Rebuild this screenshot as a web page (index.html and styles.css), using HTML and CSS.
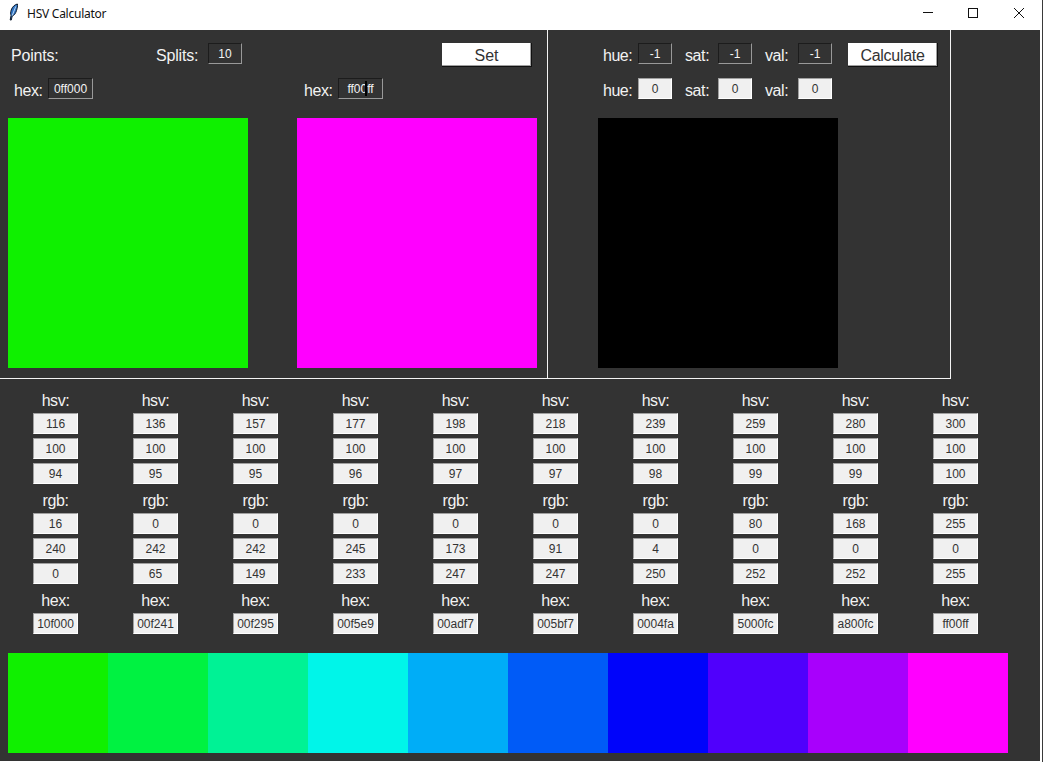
FILE: index.html
```html
<!DOCTYPE html>
<html lang="en">
<head>
<meta charset="utf-8">
<title>HSV Calculator</title>
<link rel="stylesheet" href="styles.css">
</head>
<body>
<div class="window">
  <header class="titlebar">
    <svg class="feather" width="12" height="18" viewBox="0 0 12 18"><path d="M9.4 1 C7 1.4 4.2 3.8 3.2 7 C2.5 9.2 2.5 11 3 12.6 L2.2 17 L3.3 17 L4.2 13 C6.2 12.6 7.6 10.4 8.5 7.6 C9.2 5.2 9.8 2.8 9.4 1 Z" fill="#2f74c4" stroke="#0c1a2c" stroke-width="1"/><path d="M7.8 3.4 L4.2 12.6" stroke="#bcd8f4" stroke-width="1" fill="none"/></svg>
    <span class="title">HSV Calculator</span>
    <svg class="ctl-min" width="10" height="1" viewBox="0 0 10 1"><rect width="10" height="1" fill="#111"/></svg>
    <svg class="ctl-max" width="10" height="10" viewBox="0 0 10 10"><rect x="0.5" y="0.5" width="9" height="9" fill="none" stroke="#111"/></svg>
    <svg class="ctl-close" width="10" height="10" viewBox="0 0 10 10"><path d="M0 0 L10 10 M10 0 L0 10" stroke="#111" stroke-width="1" fill="none"/></svg>
  </header>
  <main class="client">
    <section class="top">
      <div class="panel-left">
        <div class="row row-first">
          <span class="lbl w-points">Points:</span>
          <span class="lbl w-splits">Splits:</span>
          <div class="entry dark w-short">10</div>
          <button class="btn set">Set</button>
        </div>
        <div class="row row-second">
          <span class="lbl w-hex">hex:</span>
          <div class="entry dark w-long">0ff000</div>
          <span class="lbl w-hex second-hex">hex:</span>
          <div class="entry dark w-long cursor-host">ff00ff<i class="ibeam"></i></div>
        </div>
        <div class="swatches">
          <div class="swatch green"></div>
          <div class="swatch magenta"></div>
        </div>
      </div>
      <div class="panel-right">
        <div class="row row-first indent">
          <span class="lbl w-hue">hue:</span>
          <div class="entry dark w-short">-1</div>
          <span class="lbl w-sat">sat:</span>
          <div class="entry dark w-short">-1</div>
          <span class="lbl w-sat">val:</span>
          <div class="entry dark w-short">-1</div>
          <button class="btn calc">Calculate</button>
        </div>
        <div class="row row-second indent">
          <span class="lbl w-hue">hue:</span>
          <div class="entry light w-short">0</div>
          <span class="lbl w-sat">sat:</span>
          <div class="entry light w-short">0</div>
          <span class="lbl w-sat">val:</span>
          <div class="entry light w-short">0</div>
        </div>
        <div class="swatches">
          <div class="swatch black"></div>
        </div>
      </div>
    </section>
    <section class="columns">
      <div class="col"><div class="cap">hsv:</div><div class="entry light w-long">116</div><div class="entry light w-long">100</div><div class="entry light w-long">94</div><div class="cap">rgb:</div><div class="entry light w-long">16</div><div class="entry light w-long">240</div><div class="entry light w-long">0</div><div class="cap">hex:</div><div class="entry light w-long">10f000</div></div>
      <div class="col"><div class="cap">hsv:</div><div class="entry light w-long">136</div><div class="entry light w-long">100</div><div class="entry light w-long">95</div><div class="cap">rgb:</div><div class="entry light w-long">0</div><div class="entry light w-long">242</div><div class="entry light w-long">65</div><div class="cap">hex:</div><div class="entry light w-long">00f241</div></div>
      <div class="col"><div class="cap">hsv:</div><div class="entry light w-long">157</div><div class="entry light w-long">100</div><div class="entry light w-long">95</div><div class="cap">rgb:</div><div class="entry light w-long">0</div><div class="entry light w-long">242</div><div class="entry light w-long">149</div><div class="cap">hex:</div><div class="entry light w-long">00f295</div></div>
      <div class="col"><div class="cap">hsv:</div><div class="entry light w-long">177</div><div class="entry light w-long">100</div><div class="entry light w-long">96</div><div class="cap">rgb:</div><div class="entry light w-long">0</div><div class="entry light w-long">245</div><div class="entry light w-long">233</div><div class="cap">hex:</div><div class="entry light w-long">00f5e9</div></div>
      <div class="col"><div class="cap">hsv:</div><div class="entry light w-long">198</div><div class="entry light w-long">100</div><div class="entry light w-long">97</div><div class="cap">rgb:</div><div class="entry light w-long">0</div><div class="entry light w-long">173</div><div class="entry light w-long">247</div><div class="cap">hex:</div><div class="entry light w-long">00adf7</div></div>
      <div class="col"><div class="cap">hsv:</div><div class="entry light w-long">218</div><div class="entry light w-long">100</div><div class="entry light w-long">97</div><div class="cap">rgb:</div><div class="entry light w-long">0</div><div class="entry light w-long">91</div><div class="entry light w-long">247</div><div class="cap">hex:</div><div class="entry light w-long">005bf7</div></div>
      <div class="col"><div class="cap">hsv:</div><div class="entry light w-long">239</div><div class="entry light w-long">100</div><div class="entry light w-long">98</div><div class="cap">rgb:</div><div class="entry light w-long">0</div><div class="entry light w-long">4</div><div class="entry light w-long">250</div><div class="cap">hex:</div><div class="entry light w-long">0004fa</div></div>
      <div class="col"><div class="cap">hsv:</div><div class="entry light w-long">259</div><div class="entry light w-long">100</div><div class="entry light w-long">99</div><div class="cap">rgb:</div><div class="entry light w-long">80</div><div class="entry light w-long">0</div><div class="entry light w-long">252</div><div class="cap">hex:</div><div class="entry light w-long">5000fc</div></div>
      <div class="col"><div class="cap">hsv:</div><div class="entry light w-long">280</div><div class="entry light w-long">100</div><div class="entry light w-long">99</div><div class="cap">rgb:</div><div class="entry light w-long">168</div><div class="entry light w-long">0</div><div class="entry light w-long">252</div><div class="cap">hex:</div><div class="entry light w-long">a800fc</div></div>
      <div class="col"><div class="cap">hsv:</div><div class="entry light w-long">300</div><div class="entry light w-long">100</div><div class="entry light w-long">100</div><div class="cap">rgb:</div><div class="entry light w-long">255</div><div class="entry light w-long">0</div><div class="entry light w-long">255</div><div class="cap">hex:</div><div class="entry light w-long">ff00ff</div></div>
    </section>
    <section class="strip">
      <div class="band c1"></div><div class="band c2"></div><div class="band c3"></div><div class="band c4"></div><div class="band c5"></div><div class="band c6"></div><div class="band c7"></div><div class="band c8"></div><div class="band c9"></div><div class="band c10"></div>
    </section>
  </main>
</div>
</body>
</html>
```

FILE: styles.css
```css
html, body { margin: 0; padding: 0; background: #fff; }
body { width: 1043px; height: 762px; overflow: hidden; font-family: "Liberation Sans", Arial, sans-serif; }

.window { width: 1042px; height: 762px; border-right: 1px solid #3a3a3a; }

.titlebar { height: 30px; display: flex; align-items: center; background: #fff; }
.feather { margin-left: 8px; margin-top: -6px; flex: none; }
.title { margin-left: 7px; margin-top: -4px; font: 12px "Noto Sans", sans-serif; color: #111; letter-spacing: -0.25px; }
.ctl-min { margin-left: auto; margin-top: -5px; }
.ctl-max { margin-left: 35px; margin-top: -5px; }
.ctl-close { margin-left: 36px; margin-right: 18px; margin-top: -5px; }

.client { width: 1040px; height: 731px; background: #333; }

.top { width: 950px; height: 348px; display: flex; border-right: 1px solid #f4f4f4; border-bottom: 1px solid #f4f4f4; }
.panel-left { width: 547px; padding-top: 13px; border-right: 1px solid #f4f4f4; }
.panel-right { flex: 1; padding: 13px 0 0 50px; }

.row { display: flex; align-items: flex-start; }
.row-first { height: 24px; padding-left: 11px; }
.row-second { height: 21px; margin-top: 11px; padding-left: 14px; }
.indent { padding-left: 5px; }

.lbl { font-size: 16px; line-height: 26px; color: #f2f2f2; flex: none; letter-spacing: -0.2px; }
.row-second .lbl { line-height: 25px; }
.w-points { width: 145px; }
.w-splits { width: 52px; }
.w-hex { width: 34px; letter-spacing: -0.4px; }
.second-hex { margin-left: 211px; }
.w-hue { width: 35px; letter-spacing: -0.5px; }
.w-sat { width: 33px; margin-left: 13px; letter-spacing: -0.4px; }

.entry { box-sizing: border-box; height: 21px; font-size: 12px; line-height: 20px; text-align: center; border: 1px solid; flex: none; }
.dark { background: #333; color: #f4f4f4; border-color: #1c1c1c #999 #999 #1c1c1c; }
.light { background: #f0f0f0; color: #333; border-color: #a0a0a0 #fff #fff #a0a0a0; }
.w-short { width: 34px; }
.w-long { width: 45px; }

.cursor-host { position: relative; }
.ibeam { position: absolute; left: 26px; top: 2px; width: 2px; height: 15px; background: #000; }

.btn { box-sizing: border-box; width: 90px; height: 24px; padding: 3px 0 0; margin: 0; background: #fff; color: #333; font: 16px "Liberation Sans", Arial, sans-serif; border: 0; border-right: 1px solid #111; border-bottom: 1px solid #111; box-shadow: inset -1px -1px 0 #a0a0a0; flex: none; }
.set { margin-left: 200px; }
.calc { margin-left: 16px; letter-spacing: -0.3px; }

.swatches { display: flex; gap: 49px; margin-top: 19px; padding-left: 8px; }
.panel-right .swatches { padding-left: 0; }
.swatch { width: 240px; height: 250px; }
.green { background: #0ff000; }
.magenta { background: #ff00ff; }
.black { background: #000; }

.columns { display: grid; grid-template-columns: repeat(10, 95px); column-gap: 5px; padding: 9px 0 0 8px; }
.col { display: flex; flex-direction: column; align-items: center; }
.col .entry { margin-bottom: 4px; }
.cap { height: 25px; font-size: 16px; line-height: 25px; color: #f2f2f2; letter-spacing: -0.4px; }

.strip { display: flex; margin: 15px 0 0 8px; height: 100px; }
.band { width: 100px; }
.c1 { background: #10f000; }
.c2 { background: #00f241; }
.c3 { background: #00f295; }
.c4 { background: #00f5e9; }
.c5 { background: #00adf7; }
.c6 { background: #005bf7; }
.c7 { background: #0004fa; }
.c8 { background: #5000fc; }
.c9 { background: #a800fc; }
.c10 { background: #ff00ff; }
```
